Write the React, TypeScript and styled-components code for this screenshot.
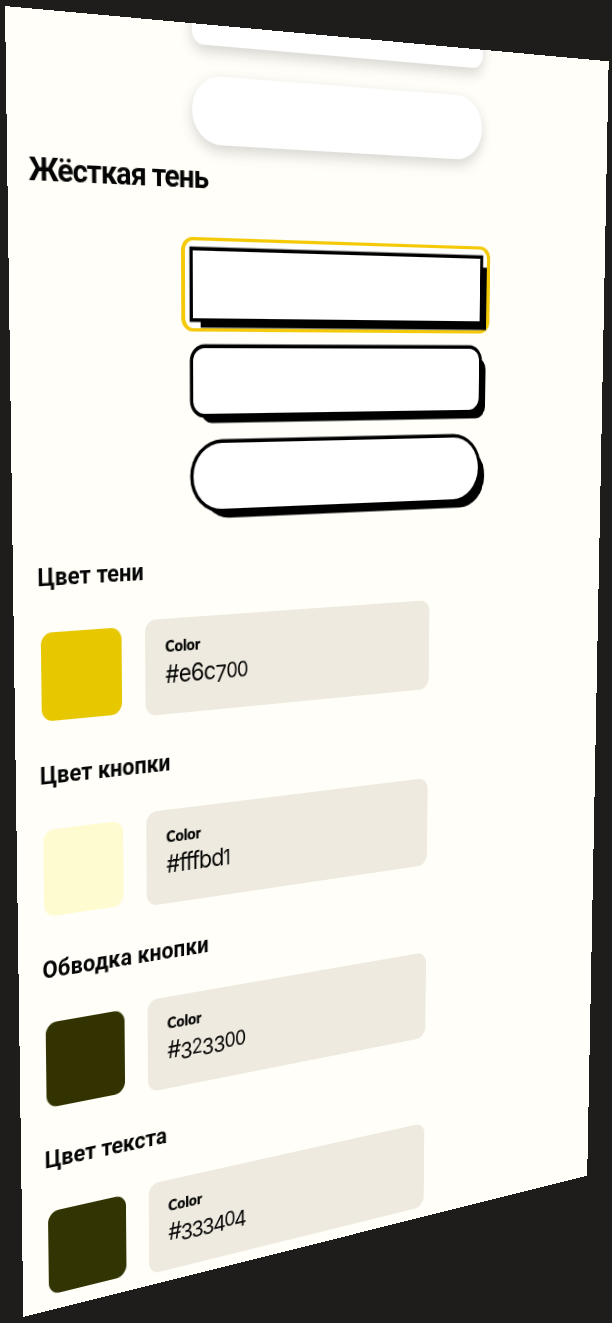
import React from 'react';
import styled, { createGlobalStyle } from 'styled-components';

const PLANE_WIDTH = 660;
const PLANE_HEIGHT = 1173;

const GlobalStyle = createGlobalStyle`
  html, body {
    margin: 0;
    padding: 0;
    background: #1e1d1b;
  }
`;

const Stage = styled.main`
  width: 612px;
  height: 1323px;
  overflow: hidden;
  background: #1e1d1b;
  font-family: Roboto, 'Open Sans', sans-serif;
  color: #040404;
`;

/* The settings page, tilted in perspective. */
const Plane = styled.div`
  display: flex;
  flex-direction: column;
  width: ${PLANE_WIDTH}px;
  height: ${PLANE_HEIGHT}px;
  overflow: hidden;
  background: #fffef8;
  transform-origin: 0 0;
  transform: matrix3d(
    1.086485, 0.101091, 0, 0.000282227,
    0.0171441, 1.204859, 0, 0.0000662234,
    0, 0, 1, 0,
    5, 6, 0, 1
  );
`;

const Options = styled.div<{ $top: number }>`
  flex: none;
  display: flex;
  flex-direction: column;
  gap: 3px;
  width: 346px;
  margin: ${(p) => p.$top}px 0 0 169.4px;
`;

const Option = styled.div<{ $selected?: boolean }>`
  box-sizing: border-box;
  height: 84.6px;
  padding: 9px 8px;
  border: solid ${(p) => (p.$selected ? '#f4c907' : 'transparent')};
  border-width: 3px 4px;
  border-radius: 12px;
  background: ${(p) => (p.$selected ? '#fffffd' : 'transparent')};
`;

const Sample = styled.div<{ $radius: number; $hard?: boolean }>`
  height: 100%;
  border-radius: ${(p) => p.$radius}px;
  background: #fff;
  box-shadow: ${(p) =>
    p.$hard
      ? '0 0 0 3.4px #000, 8px 8.5px 0 0 #000'
      : '0 5px 13px rgba(0, 0, 0, 0.17)'};
`;

const Title = styled.h2<{ $spacing: number }>`
  flex: none;
  margin: 0 0 0 20px;
  font-size: 28.5px;
  line-height: 36px;
  font-weight: 700;
  letter-spacing: ${(p) => p.$spacing}px;
  white-space: nowrap;
`;

const Fields = styled.div`
  flex: none;
  display: flex;
  flex-direction: column;
  gap: 31.2px;
  margin-top: 29.2px;
`;

const Field = styled.section`
  display: flex;
  flex-direction: column;
  gap: 30px;
  height: 147.8px;
`;

const Label = styled.h3<{ $spacing: number }>`
  margin: 0 0 0 23.4px;
  font-size: 22px;
  line-height: 28px;
  font-weight: 700;
  letter-spacing: ${(p) => p.$spacing}px;
  white-space: nowrap;
`;

const Row = styled.div`
  display: flex;
  align-items: center;
  gap: 24px;
  margin-left: 26px;
`;

const Swatch = styled.div<{ $color: string }>`
  width: 80px;
  height: 80px;
  border-radius: 11px;
  background: ${(p) => p.$color};
`;

const Input = styled.div`
  box-sizing: border-box;
  display: flex;
  flex-direction: column;
  width: 315.6px;
  height: 88.8px;
  padding: 16px 20px 0 20.8px;
  border-radius: 11px;
  background: #eeeadf;
`;

const Caption = styled.span`
  font-family: Lato, sans-serif;
  font-size: 15px;
  line-height: 18px;
  font-weight: 800;
`;

const Value = styled.span<{ $spacing: number }>`
  margin-top: 3.2px;
  font-family: Inter, sans-serif;
  font-size: 23px;
  line-height: 30px;
  letter-spacing: ${(p) => p.$spacing}px;
  white-space: nowrap;
`;

/* Old-style figures: 0-2 sit at x-height, 3, 4 and 7 hang below the baseline. */
const LowFigure = styled.span`
  font-size: 0.85em;
  line-height: 1;
`;

const HangingFigure = styled.span`
  font-size: 0.94em;
  line-height: 1;
  vertical-align: -0.13em;
`;

const figures = (value: string) =>
  (value.match(/[012]+|[3457]+|[^0-57]+/g) ?? []).map((run, i) => {
    if (/^[012]/.test(run)) return <LowFigure key={i}>{run}</LowFigure>;
    if (/^[3457]/.test(run)) return <HangingFigure key={i}>{run}</HangingFigure>;
    return run;
  });

const FIELDS = [
  { label: 'Цвет тени', value: '#e6c700', labelSpacing: 0.1, valueSpacing: -0.65 },
  { label: 'Цвет кнопки', value: '#fffbd1', labelSpacing: 0, valueSpacing: -0.95 },
  { label: 'Обводка кнопки', value: '#323300', labelSpacing: 0.18, valueSpacing: -0.95 },
  { label: 'Цвет текста', value: '#333404', labelSpacing: 0, valueSpacing: -1.5 },
];

export default function App() {
  return (
    <>
      <GlobalStyle />
      <Stage>
        <Plane>
          <Options $top={-54.6}>
            <Option><Sample $radius={12} /></Option>
            <Option><Sample $radius={30} /></Option>
          </Options>
          <Title $spacing={-0.92}>Жёсткая тень</Title>
          <Options $top={35.6}>
            <Option $selected><Sample $radius={0} $hard /></Option>
            <Option><Sample $radius={12} $hard /></Option>
            <Option><Sample $radius={30} $hard /></Option>
          </Options>
          <Fields>
            {FIELDS.map((f) => (
              <Field key={f.label}>
                <Label $spacing={f.labelSpacing}>{f.label}</Label>
                <Row>
                  <Swatch $color={f.value} />
                  <Input>
                    <Caption>Color</Caption>
                    <Value $spacing={f.valueSpacing}>{figures(f.value)}</Value>
                  </Input>
                </Row>
              </Field>
            ))}
          </Fields>
        </Plane>
      </Stage>
    </>
  );
}
